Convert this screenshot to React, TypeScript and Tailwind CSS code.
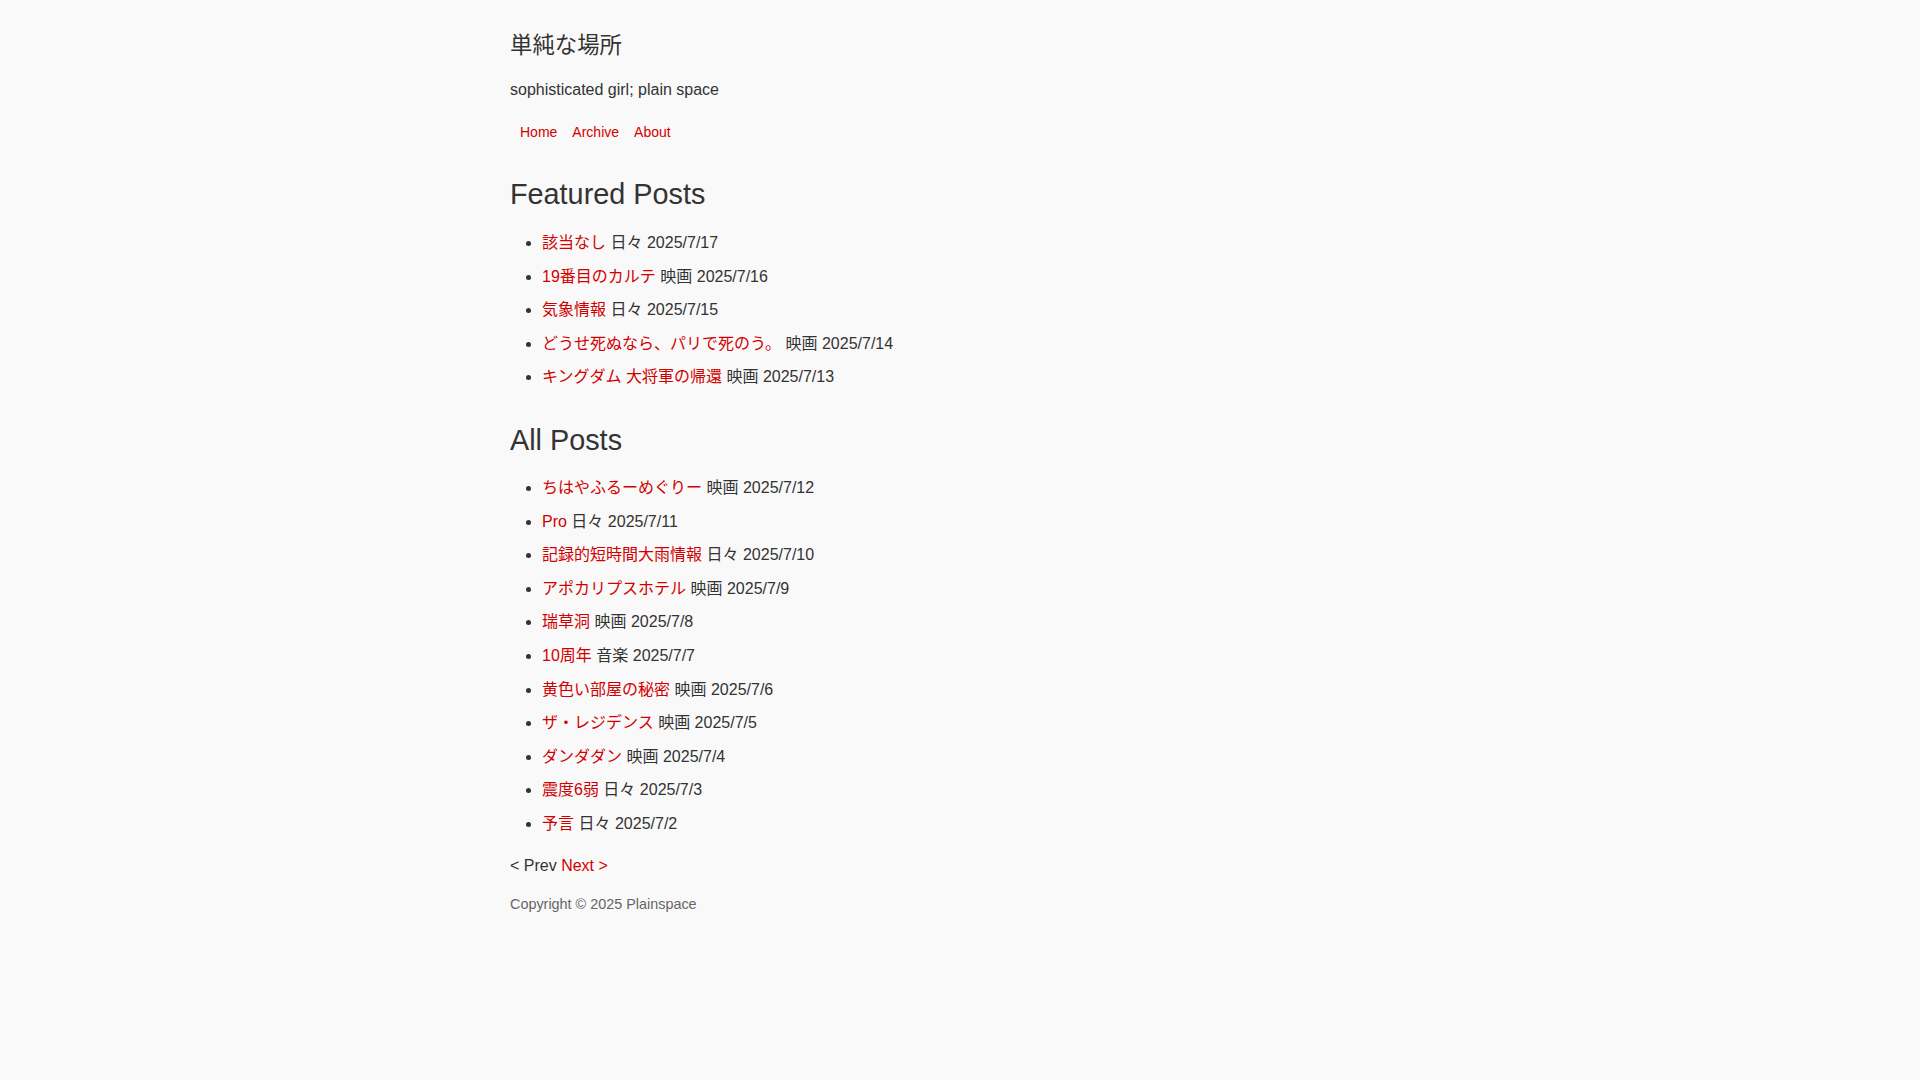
import React from "react";

const featured = [
  { t: "該当なし", c: "日々", d: "2025/7/17" },
  { t: "19番目のカルテ", c: "映画", d: "2025/7/16" },
  { t: "気象情報", c: "日々", d: "2025/7/15" },
  { t: "どうせ死ぬなら、パリで死のう。", c: "映画", d: "2025/7/14" },
  { t: "キングダム 大将軍の帰還", c: "映画", d: "2025/7/13" },
];

const all = [
  { t: "ちはやふるーめぐりー", c: "映画", d: "2025/7/12" },
  { t: "Pro", c: "日々", d: "2025/7/11" },
  { t: "記録的短時間大雨情報", c: "日々", d: "2025/7/10" },
  { t: "アポカリプスホテル", c: "映画", d: "2025/7/9" },
  { t: "瑞草洞", c: "映画", d: "2025/7/8" },
  { t: "10周年", c: "音楽", d: "2025/7/7" },
  { t: "黄色い部屋の秘密", c: "映画", d: "2025/7/6" },
  { t: "ザ・レジデンス", c: "映画", d: "2025/7/5" },
  { t: "ダンダダン", c: "映画", d: "2025/7/4" },
  { t: "震度6弱", c: "日々", d: "2025/7/3" },
  { t: "予言", c: "日々", d: "2025/7/2" },
];

function PostList({ items, className }: { items: { t: string; c: string; d: string }[]; className: string }) {
  return (
    <ul className={"list-disc pl-[32px] text-[16px] " + className}>
      {items.map((p) => (
        <li key={p.d} className="leading-[33.6px] h-[33.6px]">
          <a href="#" className="text-[#d20000]">{p.t}</a> {p.c} {p.d}
        </li>
      ))}
    </ul>
  );
}

export default function App() {
  return (
    <div
      className="min-h-[1080px] w-full bg-[#f9f9f9] text-[#333333]"
      style={{ fontFamily: '"Liberation Sans", "Noto Sans CJK JP", Arial, sans-serif' }}
    >
      <div className="mx-auto max-w-[900px] pt-[29px]">
        <h1 className="text-[22.4px] leading-[34px] h-[34px] font-normal">単純な場所</h1>
        <p className="mt-[15px] text-[16px] leading-[24px] h-[24px]">sophisticated girl; plain space</p>
        <nav className="mt-[20px] flex gap-[15px] pl-[10px] text-[14px] leading-[20px] h-[20px]">
          <a href="#" className="text-[#d20000]">Home</a>
          <a href="#" className="text-[#d20000]">Archive</a>
          <a href="#" className="text-[#d20000]">About</a>
        </nav>
        <h2 className="mt-[35px] text-[28.8px] leading-[35px] h-[35px] font-normal">Featured Posts</h2>
        <PostList items={featured} className="mt-[14px]" />
        <h2 className="mt-[29px] text-[28.8px] leading-[35px] h-[35px] font-normal">All Posts</h2>
        <PostList items={all} className="mt-[13px]" />
        <div className="mt-[13px] text-[16px] leading-[24px] h-[24px]">
          <span>&lt; Prev</span> <a href="#" className="text-[#d20000]">Next &gt;</a>
        </div>
        <footer className="mt-[16px] text-[14.4px] leading-[20px] text-[#666666]">
          Copyright © 2025 Plainspace
        </footer>
      </div>
    </div>
  );
}
